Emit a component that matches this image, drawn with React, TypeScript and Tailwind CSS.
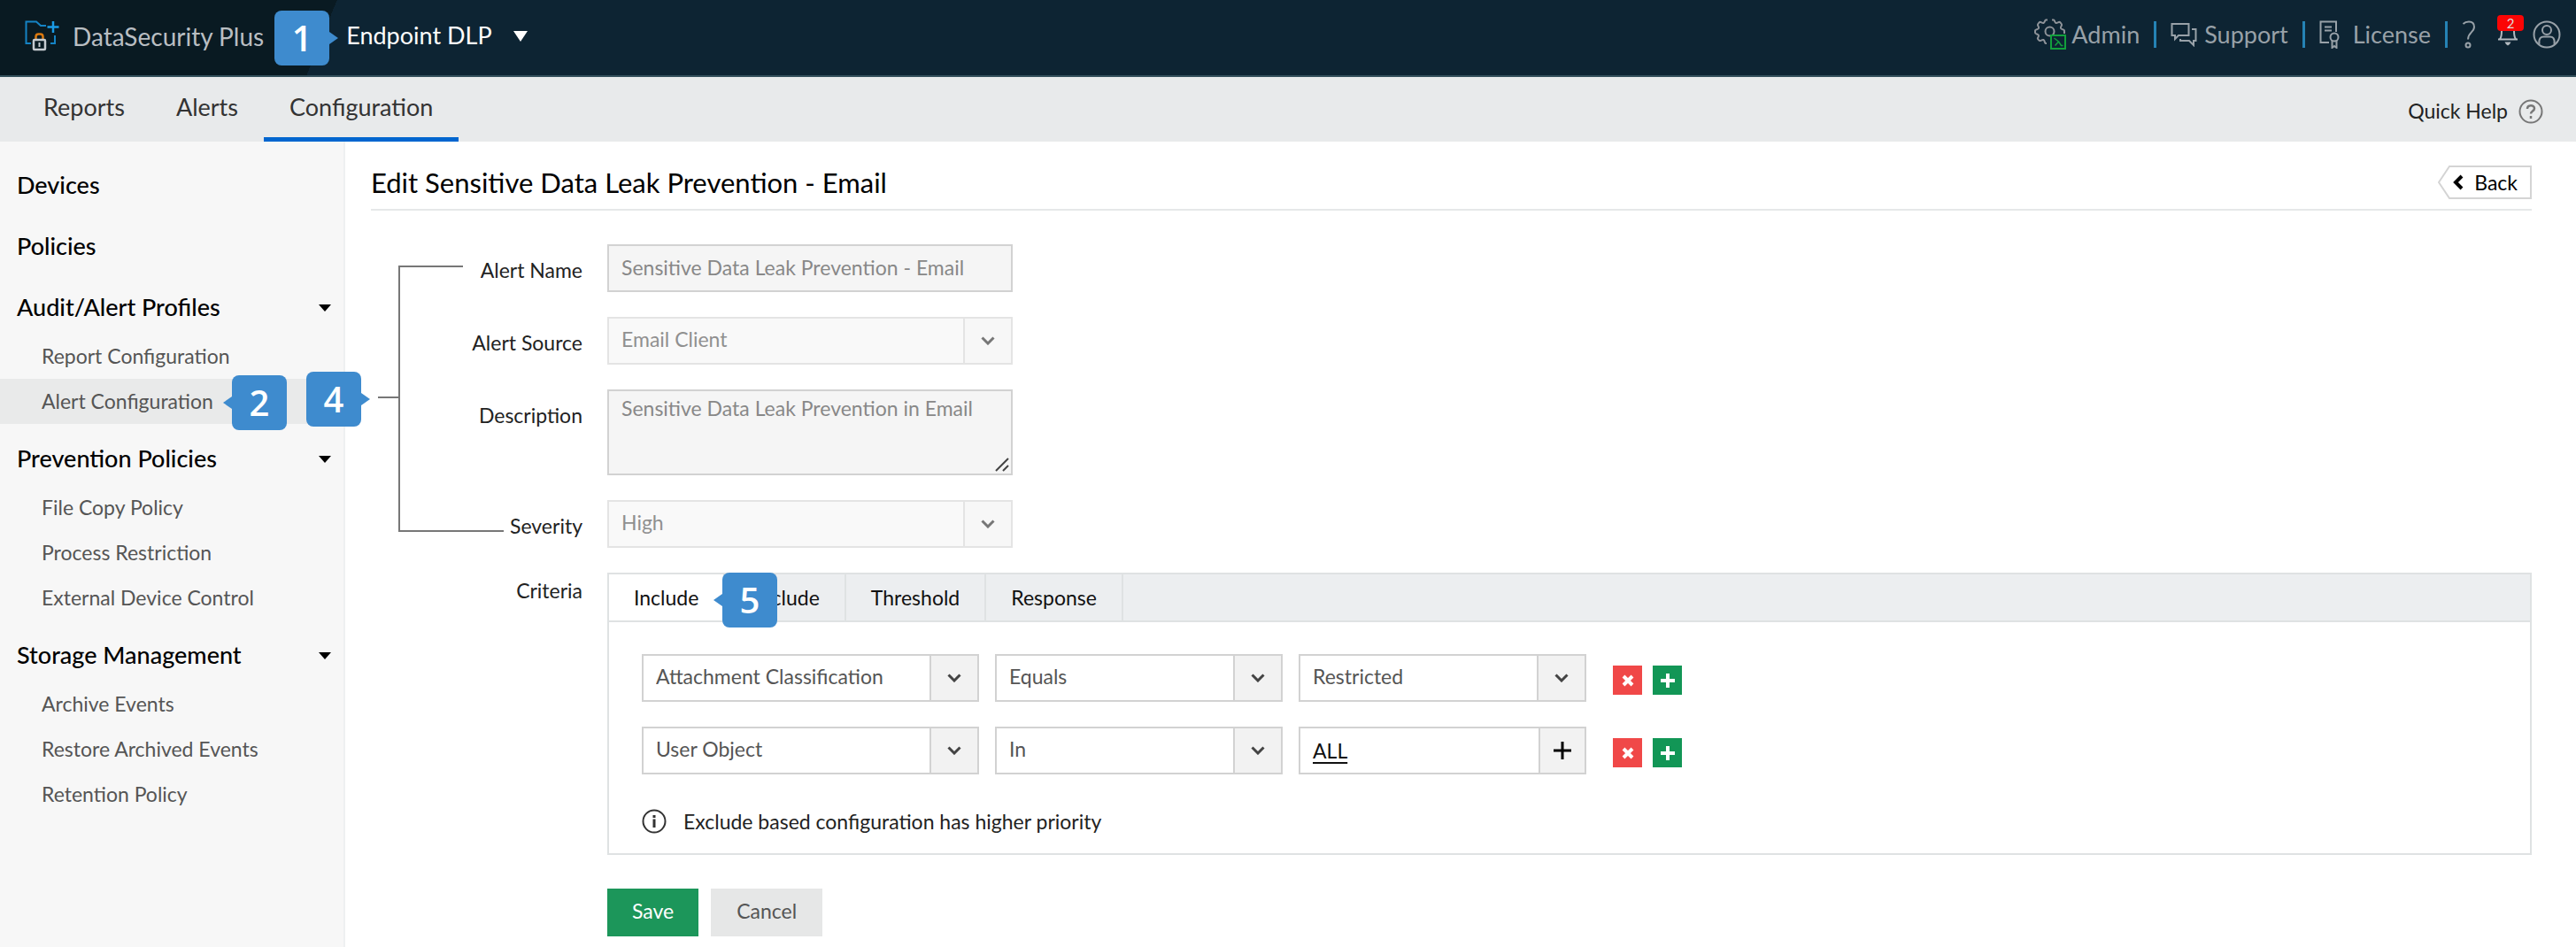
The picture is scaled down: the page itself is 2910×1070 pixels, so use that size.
import { useState } from 'react'
import { clsx } from 'clsx'

const CRITERIA_TABS = ['Include', 'Exclude', 'Threshold', 'Response']

const MENU = [
  { title: 'Devices', items: [] },
  { title: 'Policies', items: [] },
  { title: 'Audit/Alert Profiles', items: ['Report Configuration', 'Alert Configuration'] },
  { title: 'Prevention Policies', items: ['File Copy Policy', 'Process Restriction', 'External Device Control'] },
  { title: 'Storage Management', items: ['Archive Events', 'Restore Archived Events', 'Retention Policy'] },
]

function Step({ n, side, className }: { n: number; side: 'left' | 'right'; className?: string }) {
  return (
    <span
      className={clsx(
        'z-10 flex h-[62px] w-[62px] items-center justify-center rounded-lg bg-[#3e8bce] font-["Open_Sans",sans-serif] text-[40px] leading-none font-semibold text-white',
        className
      )}
    >
      {n}
      <svg
        viewBox="0 0 10 14"
        className={clsx('absolute top-6 h-[14px] w-[10px]', side === 'right' ? 'left-full' : 'right-full rotate-180')}
        fill="#3e8bce"
      >
        <path d="M0 0l10 7-10 7z" />
      </svg>
    </span>
  )
}

function Logo() {
  return (
    <svg viewBox="0 0 40 36" className="h-9 w-10" fill="none">
      <path d="M7 26H1.500V1.500H13l5 4.500h6M29 26h5v-9" stroke="#1583c4" strokeWidth="2" />
      <path d="M32 1v13M25.500 7.500h13" stroke="#1a9be6" strokeWidth="2.500" />
      <path d="M12.500 22v-3.500c0-2 1-3 3-3h2c2 0 3 1 3 3V22" stroke="#d9780f" strokeWidth="2.500" />
      <rect x="10" y="22" width="13" height="11" rx="1" stroke="#c5cbd0" strokeWidth="2.500" />
      <path d="M16.500 25v5" stroke="#c5cbd0" strokeWidth="2" />
    </svg>
  )
}

function AdminIcon() {
  return (
    <svg viewBox="0 0 36 36" className="h-9 w-9" fill="none">
      <path
        d="M15 1.500h-2c-1 0-1 3-2.500 3.500S7 3 6 4 3.500 6.500 4 7.500s1.500 2 1 3.500-4 1-4 2.500V16c0 1.500 3.500 1.500 4 3s-2 3-1 4 1.500 2 2.500 2 2.500-1.500 4-1 1 4 2.500 4H14M20 1.500h2c1 0 1 3 2.500 3.500S28 3 29 4s2.500 2.500 2 3.500-1.500 2-1 3.500 4 1 4 2.500V17"
        stroke="#8d9298"
        strokeWidth="2"
        strokeLinejoin="round"
      />
      <circle cx="17.500" cy="14.500" r="5" stroke="#8d9298" strokeWidth="2" />
      <rect x="19" y="19" width="16" height="15" fill="#0d2433" stroke="#12a03c" strokeWidth="2" />
      <path d="M22.500 22l5 4-4 4.500M27.500 26l3 4.500h2" stroke="#12a03c" strokeWidth="1.500" />
    </svg>
  )
}

function SupportIcon() {
  return (
    <svg viewBox="0 0 30 28" className="h-7 w-[30px]" fill="none" stroke="#98a1a8" strokeWidth="2">
      <path d="M1.500 2h19v13H9l-4 4v-4H1.500zM24 8h4.500v13H26v5l-5-5H11v-2" />
    </svg>
  )
}

function LicenseIcon() {
  return (
    <svg viewBox="0 0 24 32" className="h-8 w-6" fill="none" stroke="#98a1a8" strokeWidth="2">
      <path d="M11 25H1.500V1.500H19V13M6 7.500h8M6 11.500h8" />
      <circle cx="17" cy="19" r="4.500" />
      <path d="M14.500 23v8l2.500-2 2.500 2v-8" />
    </svg>
  )
}

function QuestionIcon() {
  return (
    <svg viewBox="0 0 16 32" className="h-8 w-4" fill="none" stroke="#98a1a8" strokeWidth="2">
      <path d="M1.500 4c2-2 4-2.500 6.500-2.500 4 0 6 2.500 6 6 0 6-7 6-7 14" />
      <circle cx="7" cy="28" r="2.500" />
    </svg>
  )
}

function BellIcon() {
  return (
    <svg viewBox="0 0 24 28" className="h-7 w-6" fill="none" stroke="#b3bac0" strokeWidth="2">
      <path d="M1 19.500h22M3 19c2-2 2-4 2-9 0-5 3-8 7-8s7 3 7 8c0 5 0 7 2 9" />
      <path d="M8.500 22.500h7L14 25l-2 1.500-2-1.500z" fill="#b3bac0" stroke="none" />
    </svg>
  )
}

function UserIcon() {
  return (
    <svg viewBox="0 0 32 32" className="h-8 w-8" fill="none" stroke="#98a1a8" strokeWidth="2">
      <circle cx="16" cy="16" r="14.500" />
      <circle cx="16" cy="11" r="5" />
      <path d="M7.500 27c-1-7 2-8.500 5-8.500h7c3 0 6 1.500 5 8.500" />
    </svg>
  )
}

function Caret({ className }: { className?: string }) {
  return (
    <svg viewBox="0 0 16 10" className={className} fill="currentColor" preserveAspectRatio="none">
      <path d="M0 0h16L8 10z" />
    </svg>
  )
}

type SelectProps = { id?: string; label?: string; value: string; disabled?: boolean; className?: string }

function Select({ id, label, value, disabled, className }: SelectProps) {
  return (
    <div className={clsx('relative h-[54px]', className)}>
      <select
        id={id}
        aria-label={label}
        disabled={disabled}
        className={clsx(
          'h-full w-full appearance-none border-2 pr-[54px] pb-[3px] pl-[14px] opacity-100',
          disabled ? 'border-[#e4e4e4] bg-[#f9f9f9] text-[#909090]' : 'border-[#d2d2d2] bg-white text-[#555]'
        )}
      >
        <option>{value}</option>
      </select>
      <span
        className={clsx(
          'pointer-events-none absolute inset-y-[2px] right-[2px] flex w-[54px] items-center justify-center border-l-2',
          disabled ? 'border-[#e4e4e4] bg-[#f7f7f7] text-[#777]' : 'border-[#d2d2d2] bg-[#f2f2f2] text-[#444]'
        )}
      >
        <svg viewBox="0 0 16 10" className="h-[10px] w-4" fill="none" stroke="currentColor" strokeWidth="3">
          <path d="M1.500 1.500L8 8l6.500-6.500" />
        </svg>
      </span>
    </div>
  )
}

function RowActions() {
  return (
    <div className="ml-[30px] flex gap-3 pt-[5px]">
      <button type="button" aria-label="Remove" className="flex h-[33px] w-[33px] items-center justify-center bg-[#f04848]">
        <svg viewBox="0 0 14 14" className="h-[14px] w-[14px]" stroke="#fff" strokeWidth="4">
          <path d="M2 2l10 10M12 2L2 12" />
        </svg>
      </button>
      <button type="button" aria-label="Add" className="flex h-[33px] w-[33px] items-center justify-center bg-[#129656]">
        <svg viewBox="0 0 16 16" className="h-4 w-4" stroke="#fff" strokeWidth="4">
          <path d="M8 0v16M0 8h16" />
        </svg>
      </button>
    </div>
  )
}

function Separator() {
  return <span className="h-[30px] w-[3px] bg-[#2583b5]" />
}

function Header() {
  return (
    <header className="flex h-[87px] justify-between border-b-2 border-[#33505c] bg-[#0d2433]">
      <div className="flex items-center bg-linear-[112deg,#091a22_0_353px,#0d2433_353px] pr-10 pb-1 pl-7">
        <Logo />
        <span className="ml-[14px] text-[28px] text-[#b9bec2]">DataSecurity Plus</span>
        <Step n={1} side="right" className="relative mt-1 ml-3" />
        <button className="ml-[19px] flex items-center text-[27px] text-white">
          Endpoint DLP
          <Caret className="ml-6 h-3 w-4" />
        </button>
      </div>
      <div className="flex items-center pr-[17px] pb-[7px] text-[27px] text-[#98a1a8]">
        <a href="#admin" className="mr-4 flex items-center gap-1.5">
          <AdminIcon />
          Admin
        </a>
        <Separator />
        <a href="#support" className="mx-4 flex items-center gap-2">
          <SupportIcon />
          Support
        </a>
        <Separator />
        <a href="#license" className="mx-4 flex items-center gap-[14px]">
          <LicenseIcon />
          License
        </a>
        <Separator />
        <button aria-label="Help" className="ml-4">
          <QuestionIcon />
        </button>
        <button aria-label="Notifications" className="relative ml-6">
          <BellIcon />
          <span className="absolute -top-2 left-0 flex h-[18px] w-[30px] items-center justify-center rounded bg-[#fb0505] text-[15px] text-[#ddd]">
            2
          </span>
        </button>
        <button aria-label="Account" className="ml-4">
          <UserIcon />
        </button>
      </div>
    </header>
  )
}

function Sidebar() {
  return (
    <aside className="w-[390px] shrink-0 border-r-2 border-[#eef0f1] bg-[#f7f7f7] pt-[15px]">
      {MENU.map((group) => (
        <div key={group.title}>
          <button className="flex h-[69px] w-full items-center justify-between pr-[14px] pl-[19px] text-[27px] font-medium text-black">
            {group.title}
            {group.items.length > 0 && <Caret className="h-2 w-[14px]" />}
          </button>
          {group.items.length > 0 && (
            <div className="-mt-[5px] mb-[5px]">
              {group.items.map((item) => (
                <a
                  key={item}
                  href="#"
                  className={clsx(
                    'relative flex h-[51px] items-center pl-[47px] text-[23px] text-[#555]',
                    item === 'Alert Configuration' && 'bg-[#e9eaea]'
                  )}
                >
                  {item}
                  {item === 'Alert Configuration' && <Step n={2} side="left" className="absolute -top-1 left-[262px]" />}
                </a>
              ))}
            </div>
          )}
        </div>
      ))}
    </aside>
  )
}

export default function App() {
  const [tab, setTab] = useState('Include')

  return (
    <div className="flex min-h-screen flex-col bg-white font-[Lato,sans-serif] text-[23px] text-[#222]">
      <Header />
      <nav className="flex h-[73px] items-stretch bg-[#e8eaeb] pl-5 text-[27px] text-[#333]">
        {['Reports', 'Alerts', 'Configuration'].map((name) => (
          <a
            key={name}
            href={`#${name.toLowerCase()}`}
            className={clsx(
              'flex items-center border-b-[5px] px-[29px]',
              name === 'Configuration' ? 'border-[#0066cf]' : 'border-transparent'
            )}
          >
            {name}
          </a>
        ))}
        <a href="#help" className="mr-[37px] ml-auto flex items-center gap-3 pt-1 text-[23px] text-[#222]">
          Quick Help
          <svg viewBox="0 0 28 28" className="h-7 w-7" fill="none" stroke="#777" strokeWidth="2">
            <circle cx="14" cy="14" r="12.500" />
            <path d="M10 11c0-5 8-5 8-.500 0 3-4 3-4 6M14 19v3" strokeWidth="2.500" />
          </svg>
        </a>
      </nav>

      <div className="flex flex-1">
        <Sidebar />
        <main className="min-w-0 flex-1 pr-[50px] pl-[29px]">
          <div className="flex h-[78px] items-center justify-between border-b-2 border-[#e6e8e9] pt-4 text-black">
            <h1 className="text-[31px]">Edit Sensitive Data Leak Prevention - Email</h1>
            <button className="relative flex h-[38px] w-[106px] items-center justify-end pr-4 text-[23px]">
              <svg viewBox="0 0 106 38" className="absolute inset-0 h-full w-full" fill="none">
                <path d="M13 1h92v36H13L1 19z" stroke="#d4d4d4" strokeWidth="2" />
                <path d="M27 12l-7 7 7 7" stroke="#000" strokeWidth="4" />
              </svg>
              Back
            </button>
          </div>

          <form className="relative mt-[38px] grid grid-cols-[239px_1fr] gap-x-7 gap-y-7" onSubmit={(e) => e.preventDefault()}>
            <Step n={4} side="right" className="absolute top-[144px] -left-[73px]" />
            {/* bracket joining the profile fields */}
            <svg viewBox="0 0 144 302" className="absolute top-6 left-2 h-[302px] w-36" fill="none" stroke="#777" strokeWidth="2">
              <path d="M96 1H24v299h118M0 149h24" />
            </svg>

            <label htmlFor="name" className="pt-3 text-right">Alert Name</label>
            <input
              id="name"
              disabled
              value="Sensitive Data Leak Prevention - Email"
              className="h-[54px] w-[458px] border-2 border-[#d2d2d2] bg-[#f5f5f5] px-[14px] pb-[3px] text-[#888]"
            />

            <label htmlFor="source" className="pt-3 text-right">Alert Source</label>
            <Select id="source" value="Email Client" disabled className="w-[458px]" />

            <label htmlFor="description" className="pt-3 text-right">Description</label>
            <div className="relative h-[97px] w-[458px]">
              <textarea
                id="description"
                disabled
                value="Sensitive Data Leak Prevention in Email"
                className="h-full w-full resize-none border-2 border-[#d2d2d2] bg-[#f5f5f5] px-[14px] py-[2px] text-[#888]"
              />
              <svg viewBox="0 0 16 16" className="absolute right-1 bottom-1 h-4 w-4" stroke="#444" strokeWidth="2">
                <path d="M1 15L15 1M9 15l6-6" />
              </svg>
            </div>

            <label htmlFor="severity" className="pt-3 text-right">Severity</label>
            <Select id="severity" value="High" disabled className="w-[458px]" />

            <span className="pt-[3px] text-right">Criteria</span>
            <div className="border-2 border-[#dfe2e3]">
              <div className="flex h-[54px] border-b-2 border-[#dfe2e3] bg-[#eceef0]">
                {CRITERIA_TABS.map((name) => (
                  <div key={name} className="relative flex">
                    <button
                      type="button"
                      onClick={() => setTab(name)}
                      className={clsx('border-r-2 border-[#dfe2e3] px-7 text-[#111]', tab === name && 'bg-white')}
                    >
                      {name}
                    </button>
                    {name === 'Include' && <Step n={5} side="left" className="absolute -top-[2px] left-[128px]" />}
                  </div>
                ))}
              </div>

              <div className="flex flex-col gap-7 px-[37px] pt-9 pb-[18px]">
                <div className="flex items-center">
                  <Select label="Field" value="Attachment Classification" className="w-[381px]" />
                  <Select label="Condition" value="Equals" className="ml-[18px] w-[325px]" />
                  <Select label="Value" value="Restricted" className="ml-[18px] w-[325px]" />
                  <RowActions />
                </div>
                <div className="flex items-center">
                  <Select label="Field" value="User Object" className="w-[381px]" />
                  <Select label="Condition" value="In" className="ml-[18px] w-[325px]" />
                  <div className="ml-[18px] flex h-[54px] w-[325px] items-stretch border-2 border-[#d2d2d2]">
                    <a href="#all" className="flex-1 pt-2 pl-[14px] text-[#111] underline decoration-2 underline-offset-4">
                      ALL
                    </a>
                    <button
                      type="button"
                      aria-label="Add users"
                      className="flex w-[52px] items-center justify-center border-l-2 border-[#d2d2d2] bg-[#f2f2f2]"
                    >
                      <svg viewBox="0 0 20 20" className="h-5 w-5" stroke="#000" strokeWidth="3">
                        <path d="M10 0v20M0 10h20" />
                      </svg>
                    </button>
                  </div>
                  <RowActions />
                </div>
                <p className="flex items-center gap-[19px] pt-2">
                  <svg viewBox="0 0 28 28" className="h-7 w-7" fill="none" stroke="#333" strokeWidth="2">
                    <circle cx="14" cy="14" r="12.500" />
                    <path d="M14 11.500V21M14 7v3" strokeWidth="3" />
                  </svg>
                  Exclude based configuration has higher priority
                </p>
              </div>
            </div>

            <div className="col-start-2 flex gap-[14px] pt-[10px]">
              <button type="submit" className="h-[54px] bg-[#1c965a] px-7 pb-[3px] text-white">Save</button>
              <button type="button" className="h-[54px] bg-[#e6e7e7] px-[29px] pb-[3px] text-[#555]">Cancel</button>
            </div>
          </form>
        </main>
      </div>
    </div>
  )
}
